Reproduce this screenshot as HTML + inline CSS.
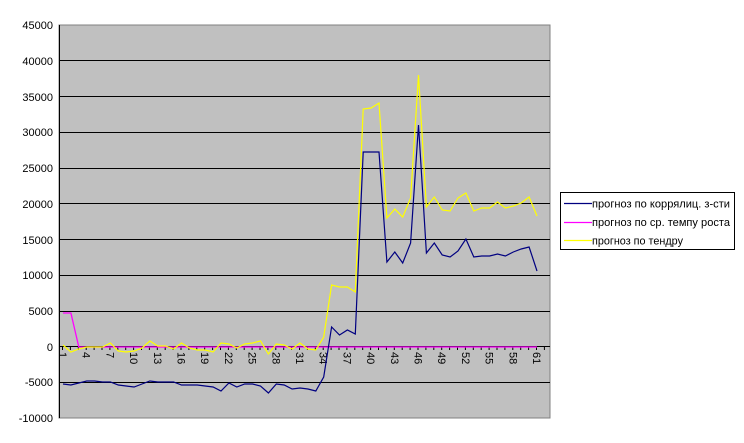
<!DOCTYPE html>
<html><head><meta charset="utf-8"><style>
html,body{margin:0;padding:0;background:#fff;width:744px;height:443px;overflow:hidden}
svg{display:block}
text{font-family:"Liberation Sans",Arial,sans-serif;font-size:11px;fill:#000}
</style></head><body>
<svg id="s" width="744" height="443" viewBox="0 0 744 443" xmlns="http://www.w3.org/2000/svg">
<rect x="59" y="25" width="491" height="393" fill="#c0c0c0" stroke="#808080" stroke-width="1"/>
<g stroke="#000" stroke-width="1">
<line x1="59" x2="550" y1="60.5" y2="60.5"/>
<line x1="59" x2="550" y1="96.5" y2="96.5"/>
<line x1="59" x2="550" y1="132.5" y2="132.5"/>
<line x1="59" x2="550" y1="168.5" y2="168.5"/>
<line x1="59" x2="550" y1="203.5" y2="203.5"/>
<line x1="59" x2="550" y1="239.5" y2="239.5"/>
<line x1="59" x2="550" y1="275.5" y2="275.5"/>
<line x1="59" x2="550" y1="311.5" y2="311.5"/>
<line x1="59" x2="550" y1="382.5" y2="382.5"/>
<line x1="59" x2="550" y1="346.5" y2="346.5"/>
<line x1="59.5" x2="59.5" y1="25" y2="418"/>
</g>
<g stroke="#000" stroke-width="1" id="ticks"></g>
<g text-anchor="end">
<text x="53" y="29">45000</text>
<text x="53" y="65">40000</text>
<text x="53" y="101">35000</text>
<text x="53" y="136">30000</text>
<text x="53" y="172">25000</text>
<text x="53" y="208">20000</text>
<text x="53" y="244">15000</text>
<text x="53" y="279">10000</text>
<text x="53" y="315">5000</text>
<text x="53" y="351">0</text>
<text x="53" y="386">-5000</text>
<text x="53" y="422">-10000</text>
</g>
<g id="lbl">
<text transform="translate(59,352) rotate(90)">1</text>
<text transform="translate(82.7,352) rotate(90)">4</text>
<text transform="translate(106.4,352) rotate(90)">7</text>
<text transform="translate(130.1,352) rotate(90)">10</text>
<text transform="translate(153.8,352) rotate(90)">13</text>
<text transform="translate(177.5,352) rotate(90)">16</text>
<text transform="translate(201.2,352) rotate(90)">19</text>
<text transform="translate(224.9,352) rotate(90)">22</text>
<text transform="translate(248.6,352) rotate(90)">25</text>
<text transform="translate(272.3,352) rotate(90)">28</text>
<text transform="translate(296,352) rotate(90)">31</text>
<text transform="translate(319.7,352) rotate(90)">34</text>
<text transform="translate(343.4,352) rotate(90)">37</text>
<text transform="translate(367.1,352) rotate(90)">40</text>
<text transform="translate(390.8,352) rotate(90)">43</text>
<text transform="translate(414.5,352) rotate(90)">46</text>
<text transform="translate(438.2,352) rotate(90)">49</text>
<text transform="translate(461.9,352) rotate(90)">52</text>
<text transform="translate(485.6,352) rotate(90)">55</text>
<text transform="translate(509.3,352) rotate(90)">58</text>
<text transform="translate(533,352) rotate(90)">61</text>
</g>
<polyline id="pm" fill="none" stroke="#ff00ff" stroke-width="1.3"/>
<polyline id="pb" fill="none" stroke="#000080" stroke-width="1.2"/>
<polyline id="py" fill="none" stroke="#ffff00" stroke-width="1.2"/>
<rect x="560.5" y="192.5" width="174" height="57" fill="#fff" stroke="#000"/>
<line x1="564" x2="592" y1="203.5" y2="203.5" stroke="#000080" stroke-width="1.2"/>
<line x1="564" x2="592" y1="222.5" y2="222.5" stroke="#ff00ff" stroke-width="1.2"/>
<line x1="564" x2="592" y1="240.5" y2="240.5" stroke="#ffff00" stroke-width="1.2"/>
<text x="592" y="207.5" textLength="138" lengthAdjust="spacingAndGlyphs">прогноз по коррялиц. з-сти</text>
<text x="592" y="226" textLength="138" lengthAdjust="spacingAndGlyphs">прогноз по ср. темпу роста</text>
<text x="592" y="244.5" textLength="91" lengthAdjust="spacingAndGlyphs">прогноз по тендру</text>
</svg>
<script>
var X=function(i){return 63+(i-1)*7.9};
var B=[384,385,383,381,381,382,382,385,386,387,384,381,382,382,382,385,385,385,386,387,391,383,387,384,384,386,393,384,385,389,388,389,391,377,327,335,330,334,152,152,152,262,252,263,243,125,253,243,255,257,251,239,257,256,256,254,256,252,249,247,271];
var Y=[345,352,349,347,347,347,343,351,352,351,348,341,346,346,349,343,348,350,350,352,343,344,348,344,343,341,354,344,345,349,343,349,350,337,285,287,287,292,109,108,103,218,209,217,198,75,207,197,210,211,198,193,211,208,208,202,208,206,203,197,216];
function pts(a){return a.map(function(v,i){return X(i+1).toFixed(1)+","+v}).join(" ")}
var M=[];for(var i=0;i<61;i++)M.push(i<2?313:347);
document.getElementById("pb").setAttribute("points",pts(B));
document.getElementById("py").setAttribute("points",pts(Y));
document.getElementById("pm").setAttribute("points",pts(M));
var t=document.getElementById("ticks"),h="";
for(var k=0;k<=61;k++){var x=(59+k*7.9+3.5).toFixed(1);h+='<line x1="'+x+'" x2="'+x+'" y1="346" y2="350"/>';}
t.innerHTML=h;
</script>
</body></html>
